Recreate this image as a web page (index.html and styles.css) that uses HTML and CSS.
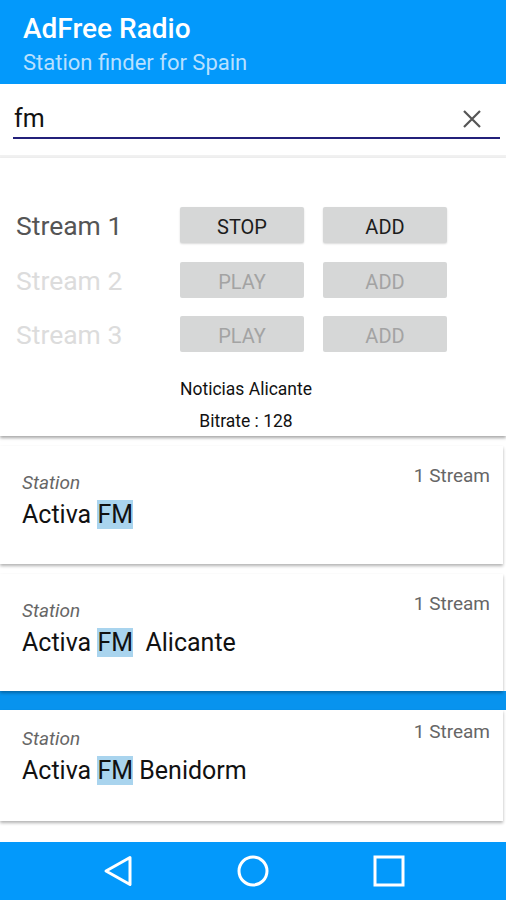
FILE: index.html
```html
<!DOCTYPE html>
<html>
<head>
<meta charset="utf-8">
<link rel="stylesheet" href="styles.css">
</head>
<body>
<div class="screen">
  <header class="appbar">
    <div class="title">AdFree Radio</div>
    <div class="subtitle">Station finder for Spain</div>
  </header>
  <div class="search">
    <div class="field">
      <span class="query">fm</span>
      <svg class="clear" width="22" height="22" viewBox="0 0 22 22"><path d="M3 3 L19 19 M19 3 L3 19" stroke="#555" stroke-width="2.2" fill="none"/></svg>
    </div>
  </div>
  <div class="gapline"></div>
  <section class="player">
    <div class="row">
      <span class="label">Stream 1</span>
      <button class="btn">STOP</button>
      <button class="btn">ADD</button>
    </div>
    <div class="row off">
      <span class="label">Stream 2</span>
      <button class="btn">PLAY</button>
      <button class="btn">ADD</button>
    </div>
    <div class="row off">
      <span class="label">Stream 3</span>
      <button class="btn">PLAY</button>
      <button class="btn">ADD</button>
    </div>
    <div class="info">Noticias Alicante</div>
    <div class="info rate">Bitrate : 128</div>
  </section>
  <div class="list">
    <div class="card">
      <div class="head"><span class="kind">Station</span><span class="count">1 Stream</span></div>
      <div class="name">Activa <mark>FM</mark></div>
    </div>
    <div class="card">
      <div class="head"><span class="kind">Station</span><span class="count">1 Stream</span></div>
      <div class="name">Activa <mark>FM</mark>&nbsp; Alicante</div>
    </div>
    <div class="strip"></div>
    <div class="card tight">
      <div class="head"><span class="kind">Station</span><span class="count">1 Stream</span></div>
      <div class="name">Activa <mark>FM</mark> Benidorm</div>
    </div>
  </div>
  <nav class="navbar">
    <svg width="30" height="32" viewBox="0 0 30 32"><path d="M27 2.5 L3 16 L27 29.5 Z" fill="none" stroke="#fff" stroke-width="3" stroke-linejoin="round"/></svg>
    <svg width="32" height="32" viewBox="0 0 32 32"><circle cx="16" cy="16" r="14" fill="none" stroke="#fff" stroke-width="3"/></svg>
    <svg width="32" height="32" viewBox="0 0 32 32"><rect x="2" y="2" width="28" height="28" fill="none" stroke="#fff" stroke-width="3"/></svg>
  </nav>
</div>
</body>
</html>
```
FILE: styles.css
```css
* { box-sizing: border-box; }
html, body { margin: 0; padding: 0; background: #fff; }
body { font-family: Roboto, "Noto Sans", sans-serif; }
.screen { width: 506px; height: 900px; display: flex; flex-direction: column; overflow: hidden; background: #fff; }

.appbar { height: 84px; background: #0399fb; color: #fff; padding: 11px 0 0 23px; }
.title { font-size: 28px; font-weight: 500; line-height: 36px; }
.subtitle { font-size: 22px; line-height: 30px; color: #b9e0ff; margin-top: 1px; }

.search { height: 71px; padding: 14px 6px 0 13px; }
.field { height: 41px; border-bottom: 2px solid #23207a; display: flex; align-items: center; justify-content: space-between; padding: 0 17px 0 1px; }
.query { font-size: 25px; color: #111; line-height: 36px; margin-top: 2px; }
.clear { margin-top: 2px; }

.gapline { height: 3px; background: #f1f1f1; }

.player { background: #fff; padding: 49px 30px 0 16px; height: 278px; box-shadow: 0 2px 3px rgba(0,0,0,0.35); position: relative; z-index: 2; }
.row { display: flex; align-items: center; height: 36px; margin-bottom: 19px; }
.row:nth-child(2) { margin-bottom: 18px; }
.label { width: 164px; font-size: 26.5px; color: #555; white-space: nowrap; }
.btn { width: 124px; height: 36px; margin-right: 19px; border: none; border-radius: 2px; background: #d6d7d7; font-family: Roboto, sans-serif; font-size: 20px; color: #1c1c1c; box-shadow: 0 1px 2px rgba(0,0,0,0.15); padding: 3px 0 0; }
.row.off .label { color: #dcdcdc; }
.row.off .btn { color: #a3a3a3; box-shadow: none; }
.info { text-align: center; font-size: 17.5px; color: #111; line-height: 22px; margin-top: 26px; }
.info.rate { margin-top: 10px; }

.list { flex: 1; padding-top: 10px; display: flex; flex-direction: column; }
.card { height: 118px; margin: 0 3px 10px 0; background: #fff; box-shadow: 0 2px 3px rgba(0,0,0,0.3); padding: 19px 13px 0 22px; position: relative; }
.card:nth-child(2) { height: 117px; margin-bottom: 0; }
.card.tight { height: 111px; padding-top: 11px; }
.strip { height: 19px; background: #0893ee; }
.head { display: flex; justify-content: space-between; align-items: flex-start; }
.kind { font-size: 19px; font-style: italic; color: #666; margin-top: 6px; }
.count { font-size: 19px; color: #666; margin-top: -1px; }
.name { font-size: 25px; color: #111; line-height: 33px; margin-top: 4px; }
mark { background: #a9d4ee; color: #111; }

.navbar { height: 58px; background: #0399fb; display: flex; justify-content: center; align-items: center; gap: 104px; padding-left: 2px; margin-top: auto; }
```
